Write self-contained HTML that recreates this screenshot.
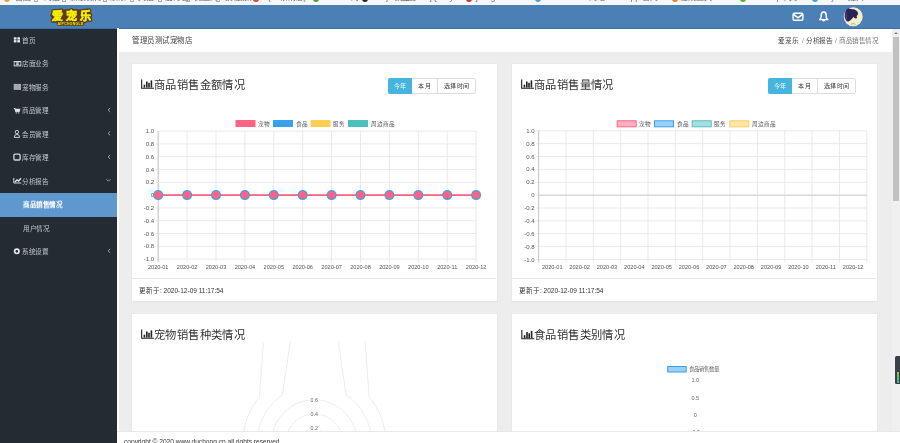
<!DOCTYPE html>
<html lang="zh-CN"><head><meta charset="utf-8">
<style>
*{margin:0;padding:0;box-sizing:border-box}
html,body{width:900px;height:443px;overflow:hidden;background:#ededed;font-family:"Liberation Sans",sans-serif;position:relative}
.abs{position:absolute}
#bm{left:0;top:0;width:900px;height:5px;background:#f7f7f7;overflow:hidden}
#hdr{left:0;top:5px;width:900px;height:23.8px;background:#4b80b6;border-bottom:1px solid #3b70a6}
#side{left:0;top:28.8px;width:117px;height:415px;background:#242b33}
#crumb{left:117px;top:28.8px;width:776px;height:23px;background:#fff}
.card{position:absolute;background:#fff;box-shadow:0 0 0 0.5px #e6e6e6,0 1px 1.5px rgba(0,0,0,0.06)}
.menu{position:absolute;left:0;width:117px;height:23.5px;color:#c4c8cc;font-size:6.6px;letter-spacing:-0.3px;line-height:23.5px;white-space:nowrap}
.menu .tx{position:absolute;left:22px;top:0}
.menu .ch{position:absolute;left:106px;top:0;font-size:8px;color:#9aa}
.ttl{position:absolute;font-size:11.3px;letter-spacing:0.4px;color:#333;white-space:nowrap;line-height:14px}
.btns{position:absolute;height:16px;border:1px solid #ddd;border-radius:2px;font-size:6px;letter-spacing:0.6px;line-height:15px;color:#333;white-space:nowrap;display:flex;background:#fff}
.btns span{display:block;height:14px;text-align:center}
.upd{position:absolute;font-size:6.5px;color:#333;white-space:nowrap;line-height:8px;margin-top:0.3px}
svg text{font-family:"Liberation Sans",sans-serif}
.abs,.menu,.ttl,.btns,.upd{will-change:transform}
</style></head><body>
<div id="bm" class="abs"><span style="position:absolute;left:4px;top:-4px;width:6px;height:6px;border-radius:3px;background:#e0a040"></span><span style="position:absolute;left:15px;top:-7.2px;font-size:8px;line-height:10px;color:#666;white-space:nowrap">百度</span><span style="position:absolute;left:34px;top:-4px;width:4px;height:6px;border:1px solid #aaa"></span><span style="position:absolute;left:44px;top:-7.2px;font-size:8px;line-height:10px;color:#666;white-space:nowrap">淘宝</span><span style="position:absolute;left:62px;top:-4px;width:4px;height:6px;border:1px solid #aaa"></span><span style="position:absolute;left:70px;top:-7.2px;font-size:8px;line-height:10px;color:#666;white-space:nowrap">新浪微博</span><span style="position:absolute;left:103px;top:-4px;width:4px;height:6px;border:1px solid #aaa"></span><span style="position:absolute;left:110px;top:-7.2px;font-size:8px;line-height:10px;color:#666;white-space:nowrap">京东</span><span style="position:absolute;left:130px;top:-4px;width:4px;height:6px;border:1px solid #aaa"></span><span style="position:absolute;left:138px;top:-7.2px;font-size:8px;line-height:10px;color:#666;white-space:nowrap">天猫</span><span style="position:absolute;left:158px;top:-4px;width:4px;height:6px;border:1px solid #aaa"></span><span style="position:absolute;left:165px;top:-7.2px;font-size:8px;line-height:10px;color:#666;white-space:nowrap">爱奇艺</span><span style="position:absolute;left:186px;top:-4px;width:4px;height:6px;border:1px solid #aaa"></span><span style="position:absolute;left:194px;top:-7.2px;font-size:8px;line-height:10px;color:#666;white-space:nowrap">优酷网</span><span style="position:absolute;left:216px;top:-4px;width:4px;height:6px;border:1px solid #aaa"></span><span style="position:absolute;left:225px;top:-7.2px;font-size:8px;line-height:10px;color:#666;white-space:nowrap">携程旅行</span><span style="position:absolute;left:253px;top:-4px;width:6px;height:6px;border-radius:3px;background:#e04030"></span><span style="position:absolute;left:268px;top:-7.2px;font-size:8px;line-height:10px;color:#666;white-space:nowrap">(85条消息)</span><span style="position:absolute;left:313px;top:-4px;width:6px;height:6px;border-radius:3px;background:#50a030"></span><span style="position:absolute;left:320px;top:-7.2px;font-size:8px;line-height:10px;color:#666;white-space:nowrap">iconfont-阿</span><span style="position:absolute;left:362px;top:-4px;width:6px;height:6px;border-radius:3px;background:#222"></span><span style="position:absolute;left:370px;top:-7.2px;font-size:8px;line-height:10px;color:#666;white-space:nowrap">Vue.js 教程</span><span style="position:absolute;left:400px;top:-7.2px;font-size:8px;line-height:10px;color:#666;white-space:nowrap">百度</span><span style="position:absolute;left:430px;top:-7.2px;font-size:8px;line-height:10px;color:#666;white-space:nowrap">jQuery API</span><span style="position:absolute;left:466px;top:-4px;width:6px;height:6px;border-radius:3px;background:#d03030"></span><span style="position:absolute;left:476px;top:-7.2px;font-size:8px;line-height:10px;color:#666;white-space:nowrap">jsongenerator.</span><span style="position:absolute;left:535px;top:-4px;width:6px;height:6px;border-radius:3px;background:#40a0e0"></span><span style="position:absolute;left:553px;top:-7.2px;font-size:8px;line-height:10px;color:#666;white-space:nowrap">Element - 网站</span><span style="position:absolute;left:613px;top:-7.2px;font-size:8px;line-height:10px;color:#666;white-space:nowrap">uni-app 官网</span><span style="position:absolute;left:672px;top:-4px;width:6px;height:6px;border-radius:3px;background:#f08020"></span><span style="position:absolute;left:680px;top:-7.2px;font-size:8px;line-height:10px;color:#666;white-space:nowrap">在线工具 - </span><span style="position:absolute;left:740px;top:-4px;width:6px;height:6px;border-radius:3px;background:#50b030"></span><span style="position:absolute;left:747px;top:-7.2px;font-size:8px;line-height:10px;color:#666;white-space:nowrap">Bootstrap中文</span><span style="position:absolute;left:812px;top:-4px;width:6px;height:6px;border-radius:3px;background:#40a0e0"></span><span style="position:absolute;left:822px;top:-7.2px;font-size:8px;line-height:10px;color:#666;white-space:nowrap">Layui - 经典</span></div>
<div id="hdr" class="abs"></div>
<div id="side" class="abs"></div>
<div id="crumb" class="abs"></div>
<div class="abs" style="left:117px;top:28px;width:2px;height:415px;background:#fff"></div>
<div class="abs" style="left:132px;top:36px;font-size:7.5px;letter-spacing:0.5px;color:#444;line-height:10px;white-space:nowrap">管理员测试宠物店</div>
<div class="abs" style="left:777.5px;top:36px;font-size:6.6px;letter-spacing:-0.2px;color:#444;line-height:9px;white-space:nowrap">爱宠乐</div>
<div class="abs" style="left:802px;top:36px;font-size:6.6px;color:#888;line-height:9px;white-space:nowrap">/</div>
<div class="abs" style="left:805.5px;top:36px;font-size:6.6px;letter-spacing:-0.4px;color:#444;line-height:9px;white-space:nowrap">分析报告</div>
<div class="abs" style="left:834.5px;top:36px;font-size:6.6px;color:#888;line-height:9px;white-space:nowrap">/</div>
<div class="abs" style="left:838.5px;top:36px;font-size:6.6px;letter-spacing:-0.4px;color:#777;line-height:9px;white-space:nowrap">商品销售情况</div>

<div class="menu" style="top:28.5px"><span class="tx">首页</span></div>
<div class="menu" style="top:52px"><span class="tx">店面业务</span></div>
<div class="menu" style="top:75.5px"><span class="tx">宠物服务</span></div>
<div class="menu" style="top:99px"><span class="tx">商品管理</span></div>
<div class="menu" style="top:122.5px"><span class="tx">会员管理</span></div>
<div class="menu" style="top:146px"><span class="tx">库存管理</span></div>
<div class="menu" style="top:169.5px"><span class="tx">分析报告</span></div>
<div class="menu" style="top:192.5px;background:#5f98cf;color:#fff;height:23.5px;line-height:23.5px"><span class="tx" style="left:23px;font-weight:bold;letter-spacing:-0.4px">商品销售情况</span></div>
<div class="menu" style="top:216.5px"><span class="tx" style="left:23px">用户情况</span></div>
<div class="menu" style="top:240px"><span class="tx">系统设置</span></div>

<div class="card" style="left:131.5px;top:63.5px;width:365.6px;height:237.8px"></div>
<div class="card" style="left:511.8px;top:63.5px;width:365.5px;height:237.8px"></div>
<div class="card" style="left:131.5px;top:313.5px;width:365.6px;height:140px"></div>
<div class="card" style="left:511.8px;top:313.5px;width:365.5px;height:140px"></div>

<div class="ttl" style="left:154px;top:77.5px">商品销售金额情况</div>
<div class="ttl" style="left:534px;top:77.5px">商品销售量情况</div>
<div class="ttl" style="left:154px;top:327.5px">宠物销售种类情况</div>
<div class="ttl" style="left:534px;top:328px">食品销售类别情况</div>

<div class="btns" style="left:388px;top:78px"><span style="width:24px;background:#45b4de;color:#fff;margin:-1px 0 -1px -1px;height:16px;line-height:16.5px;padding-left:0.6px;border-radius:2px 0 0 2px">今年</span><span style="width:26px;border-right:1px solid #ddd;padding-left:0.6px">本月</span><span style="width:37px;padding-left:0.6px">选择时间</span></div>
<div class="btns" style="left:768px;top:78px"><span style="width:24px;background:#45b4de;color:#fff;margin:-1px 0 -1px -1px;height:16px;line-height:16.5px;padding-left:0.6px;border-radius:2px 0 0 2px">今年</span><span style="width:26px;border-right:1px solid #ddd;padding-left:0.6px">本月</span><span style="width:37px;padding-left:0.6px">选择时间</span></div>

<div class="abs" style="left:132px;top:278px;width:364px;height:1px;background:#e8e8e8"></div>
<div class="abs" style="left:512px;top:278px;width:364px;height:1px;background:#e8e8e8"></div>
<div class="upd" style="left:139px;top:287px">更新于: 2020-12-09 11:17:54</div>
<div class="upd" style="left:519px;top:287px">更新于: 2020-12-09 11:17:54</div>

<svg class="abs" style="left:0;top:0" width="900" height="443" viewBox="0 0 900 443">
<line x1="155.7" y1="131.1" x2="476.1" y2="131.1" stroke="#e9e9e9" stroke-width="1"/>
<line x1="155.7" y1="143.9" x2="476.1" y2="143.9" stroke="#e9e9e9" stroke-width="1"/>
<line x1="155.7" y1="156.7" x2="476.1" y2="156.7" stroke="#e9e9e9" stroke-width="1"/>
<line x1="155.7" y1="169.5" x2="476.1" y2="169.5" stroke="#e9e9e9" stroke-width="1"/>
<line x1="155.7" y1="182.3" x2="476.1" y2="182.3" stroke="#e9e9e9" stroke-width="1"/>
<line x1="155.7" y1="195.1" x2="476.1" y2="195.1" stroke="#e9e9e9" stroke-width="1"/>
<line x1="155.7" y1="207.9" x2="476.1" y2="207.9" stroke="#e9e9e9" stroke-width="1"/>
<line x1="155.7" y1="220.7" x2="476.1" y2="220.7" stroke="#e9e9e9" stroke-width="1"/>
<line x1="155.7" y1="233.5" x2="476.1" y2="233.5" stroke="#e9e9e9" stroke-width="1"/>
<line x1="155.7" y1="246.3" x2="476.1" y2="246.3" stroke="#e9e9e9" stroke-width="1"/>
<line x1="155.7" y1="259.1" x2="476.1" y2="259.1" stroke="#e9e9e9" stroke-width="1"/>
<line x1="158.2" y1="131.1" x2="158.2" y2="262.1" stroke="#e9e9e9" stroke-width="1"/>
<line x1="187.1" y1="131.1" x2="187.1" y2="262.1" stroke="#e9e9e9" stroke-width="1"/>
<line x1="216" y1="131.1" x2="216" y2="262.1" stroke="#e9e9e9" stroke-width="1"/>
<line x1="244.9" y1="131.1" x2="244.9" y2="262.1" stroke="#e9e9e9" stroke-width="1"/>
<line x1="273.8" y1="131.1" x2="273.8" y2="262.1" stroke="#e9e9e9" stroke-width="1"/>
<line x1="302.7" y1="131.1" x2="302.7" y2="262.1" stroke="#e9e9e9" stroke-width="1"/>
<line x1="331.6" y1="131.1" x2="331.6" y2="262.1" stroke="#e9e9e9" stroke-width="1"/>
<line x1="360.5" y1="131.1" x2="360.5" y2="262.1" stroke="#e9e9e9" stroke-width="1"/>
<line x1="389.4" y1="131.1" x2="389.4" y2="262.1" stroke="#e9e9e9" stroke-width="1"/>
<line x1="418.3" y1="131.1" x2="418.3" y2="262.1" stroke="#e9e9e9" stroke-width="1"/>
<line x1="447.2" y1="131.1" x2="447.2" y2="262.1" stroke="#e9e9e9" stroke-width="1"/>
<line x1="476.1" y1="131.1" x2="476.1" y2="262.1" stroke="#e9e9e9" stroke-width="1"/>
<line x1="158.2" y1="131.1" x2="158.2" y2="262.1" stroke="#c9c9c9" stroke-width="1"/>
<line x1="158.2" y1="195.1" x2="476.1" y2="195.1" stroke="#cfcfcf" stroke-width="1"/>
<text x="154.2" y="133.1" text-anchor="end" font-size="6" fill="#555">1.0</text>
<text x="154.2" y="145.9" text-anchor="end" font-size="6" fill="#555">0.8</text>
<text x="154.2" y="158.7" text-anchor="end" font-size="6" fill="#555">0.6</text>
<text x="154.2" y="171.5" text-anchor="end" font-size="6" fill="#555">0.4</text>
<text x="154.2" y="184.3" text-anchor="end" font-size="6" fill="#555">0.2</text>
<text x="154.2" y="197.1" text-anchor="end" font-size="6" fill="#555">0</text>
<text x="154.2" y="209.9" text-anchor="end" font-size="6" fill="#555">-0.2</text>
<text x="154.2" y="222.7" text-anchor="end" font-size="6" fill="#555">-0.4</text>
<text x="154.2" y="235.5" text-anchor="end" font-size="6" fill="#555">-0.6</text>
<text x="154.2" y="248.3" text-anchor="end" font-size="6" fill="#555">-0.8</text>
<text x="154.2" y="261.1" text-anchor="end" font-size="6" fill="#555">-1.0</text>
<text x="158.2" y="268.9" text-anchor="middle" font-size="5.6" fill="#555">2020-01</text>
<text x="187.1" y="268.9" text-anchor="middle" font-size="5.6" fill="#555">2020-02</text>
<text x="216" y="268.9" text-anchor="middle" font-size="5.6" fill="#555">2020-03</text>
<text x="244.9" y="268.9" text-anchor="middle" font-size="5.6" fill="#555">2020-04</text>
<text x="273.8" y="268.9" text-anchor="middle" font-size="5.6" fill="#555">2020-05</text>
<text x="302.7" y="268.9" text-anchor="middle" font-size="5.6" fill="#555">2020-06</text>
<text x="331.6" y="268.9" text-anchor="middle" font-size="5.6" fill="#555">2020-07</text>
<text x="360.5" y="268.9" text-anchor="middle" font-size="5.6" fill="#555">2020-08</text>
<text x="389.4" y="268.9" text-anchor="middle" font-size="5.6" fill="#555">2020-09</text>
<text x="418.3" y="268.9" text-anchor="middle" font-size="5.6" fill="#555">2020-10</text>
<text x="447.2" y="268.9" text-anchor="middle" font-size="5.6" fill="#555">2020-11</text>
<text x="476.1" y="268.9" text-anchor="middle" font-size="5.6" fill="#555">2020-12</text>
<line x1="158.2" y1="195.1" x2="476.1" y2="195.1" stroke="#ff6384" stroke-width="1.6"/>
<circle cx="158.2" cy="195.1" r="5" fill="#36a2eb"/>
<circle cx="158.2" cy="195.1" r="3.8" fill="#ff6384"/>
<circle cx="187.1" cy="195.1" r="5" fill="#36a2eb"/>
<circle cx="187.1" cy="195.1" r="3.8" fill="#ff6384"/>
<circle cx="216" cy="195.1" r="5" fill="#36a2eb"/>
<circle cx="216" cy="195.1" r="3.8" fill="#ff6384"/>
<circle cx="244.9" cy="195.1" r="5" fill="#36a2eb"/>
<circle cx="244.9" cy="195.1" r="3.8" fill="#ff6384"/>
<circle cx="273.8" cy="195.1" r="5" fill="#36a2eb"/>
<circle cx="273.8" cy="195.1" r="3.8" fill="#ff6384"/>
<circle cx="302.7" cy="195.1" r="5" fill="#36a2eb"/>
<circle cx="302.7" cy="195.1" r="3.8" fill="#ff6384"/>
<circle cx="331.6" cy="195.1" r="5" fill="#36a2eb"/>
<circle cx="331.6" cy="195.1" r="3.8" fill="#ff6384"/>
<circle cx="360.5" cy="195.1" r="5" fill="#36a2eb"/>
<circle cx="360.5" cy="195.1" r="3.8" fill="#ff6384"/>
<circle cx="389.4" cy="195.1" r="5" fill="#36a2eb"/>
<circle cx="389.4" cy="195.1" r="3.8" fill="#ff6384"/>
<circle cx="418.3" cy="195.1" r="5" fill="#36a2eb"/>
<circle cx="418.3" cy="195.1" r="3.8" fill="#ff6384"/>
<circle cx="447.2" cy="195.1" r="5" fill="#36a2eb"/>
<circle cx="447.2" cy="195.1" r="3.8" fill="#ff6384"/>
<circle cx="476.1" cy="195.1" r="5" fill="#36a2eb"/>
<circle cx="476.1" cy="195.1" r="3.8" fill="#ff6384"/>
<line x1="536.1" y1="130.8" x2="866.8" y2="130.8" stroke="#e9e9e9" stroke-width="1"/>
<line x1="536.1" y1="143.67" x2="866.8" y2="143.67" stroke="#e9e9e9" stroke-width="1"/>
<line x1="536.1" y1="156.54" x2="866.8" y2="156.54" stroke="#e9e9e9" stroke-width="1"/>
<line x1="536.1" y1="169.41" x2="866.8" y2="169.41" stroke="#e9e9e9" stroke-width="1"/>
<line x1="536.1" y1="182.28" x2="866.8" y2="182.28" stroke="#e9e9e9" stroke-width="1"/>
<line x1="536.1" y1="195.15" x2="866.8" y2="195.15" stroke="#e9e9e9" stroke-width="1"/>
<line x1="536.1" y1="208.02" x2="866.8" y2="208.02" stroke="#e9e9e9" stroke-width="1"/>
<line x1="536.1" y1="220.89" x2="866.8" y2="220.89" stroke="#e9e9e9" stroke-width="1"/>
<line x1="536.1" y1="233.76" x2="866.8" y2="233.76" stroke="#e9e9e9" stroke-width="1"/>
<line x1="536.1" y1="246.63" x2="866.8" y2="246.63" stroke="#e9e9e9" stroke-width="1"/>
<line x1="536.1" y1="259.5" x2="866.8" y2="259.5" stroke="#e9e9e9" stroke-width="1"/>
<line x1="538.6" y1="130.8" x2="538.6" y2="262.5" stroke="#e9e9e9" stroke-width="1"/>
<line x1="565.95" y1="130.8" x2="565.95" y2="262.5" stroke="#e9e9e9" stroke-width="1"/>
<line x1="593.3" y1="130.8" x2="593.3" y2="262.5" stroke="#e9e9e9" stroke-width="1"/>
<line x1="620.65" y1="130.8" x2="620.65" y2="262.5" stroke="#e9e9e9" stroke-width="1"/>
<line x1="648" y1="130.8" x2="648" y2="262.5" stroke="#e9e9e9" stroke-width="1"/>
<line x1="675.35" y1="130.8" x2="675.35" y2="262.5" stroke="#e9e9e9" stroke-width="1"/>
<line x1="702.7" y1="130.8" x2="702.7" y2="262.5" stroke="#e9e9e9" stroke-width="1"/>
<line x1="730.05" y1="130.8" x2="730.05" y2="262.5" stroke="#e9e9e9" stroke-width="1"/>
<line x1="757.4" y1="130.8" x2="757.4" y2="262.5" stroke="#e9e9e9" stroke-width="1"/>
<line x1="784.75" y1="130.8" x2="784.75" y2="262.5" stroke="#e9e9e9" stroke-width="1"/>
<line x1="812.1" y1="130.8" x2="812.1" y2="262.5" stroke="#e9e9e9" stroke-width="1"/>
<line x1="839.45" y1="130.8" x2="839.45" y2="262.5" stroke="#e9e9e9" stroke-width="1"/>
<line x1="866.8" y1="130.8" x2="866.8" y2="262.5" stroke="#e9e9e9" stroke-width="1"/>
<line x1="538.6" y1="130.8" x2="538.6" y2="262.5" stroke="#c9c9c9" stroke-width="1"/>
<line x1="538.6" y1="195.15" x2="866.8" y2="195.15" stroke="#cfcfcf" stroke-width="1"/>
<text x="534.6" y="132.8" text-anchor="end" font-size="6" fill="#555">1.0</text>
<text x="534.6" y="145.67" text-anchor="end" font-size="6" fill="#555">0.8</text>
<text x="534.6" y="158.54" text-anchor="end" font-size="6" fill="#555">0.6</text>
<text x="534.6" y="171.41" text-anchor="end" font-size="6" fill="#555">0.4</text>
<text x="534.6" y="184.28" text-anchor="end" font-size="6" fill="#555">0.2</text>
<text x="534.6" y="197.15" text-anchor="end" font-size="6" fill="#555">0</text>
<text x="534.6" y="210.02" text-anchor="end" font-size="6" fill="#555">-0.2</text>
<text x="534.6" y="222.89" text-anchor="end" font-size="6" fill="#555">-0.4</text>
<text x="534.6" y="235.76" text-anchor="end" font-size="6" fill="#555">-0.6</text>
<text x="534.6" y="248.63" text-anchor="end" font-size="6" fill="#555">-0.8</text>
<text x="534.6" y="261.5" text-anchor="end" font-size="6" fill="#555">-1.0</text>
<text x="552.27" y="269.3" text-anchor="middle" font-size="5.6" fill="#555">2020-01</text>
<text x="579.62" y="269.3" text-anchor="middle" font-size="5.6" fill="#555">2020-02</text>
<text x="606.98" y="269.3" text-anchor="middle" font-size="5.6" fill="#555">2020-03</text>
<text x="634.33" y="269.3" text-anchor="middle" font-size="5.6" fill="#555">2020-04</text>
<text x="661.67" y="269.3" text-anchor="middle" font-size="5.6" fill="#555">2020-05</text>
<text x="689.02" y="269.3" text-anchor="middle" font-size="5.6" fill="#555">2020-06</text>
<text x="716.38" y="269.3" text-anchor="middle" font-size="5.6" fill="#555">2020-07</text>
<text x="743.73" y="269.3" text-anchor="middle" font-size="5.6" fill="#555">2020-08</text>
<text x="771.08" y="269.3" text-anchor="middle" font-size="5.6" fill="#555">2020-09</text>
<text x="798.42" y="269.3" text-anchor="middle" font-size="5.6" fill="#555">2020-10</text>
<text x="825.77" y="269.3" text-anchor="middle" font-size="5.6" fill="#555">2020-11</text>
<text x="853.12" y="269.3" text-anchor="middle" font-size="5.6" fill="#555">2020-12</text>
<rect x="235.5" y="120" width="20" height="7" fill="#ff6384"/>
<text x="258" y="125.7" font-size="5.6" fill="#555">宠物</text>
<rect x="273" y="120" width="20" height="7" fill="#36a2eb"/>
<text x="295.5" y="125.7" font-size="5.6" fill="#555">食品</text>
<rect x="310.6" y="120" width="20" height="7" fill="#ffce56"/>
<text x="333.1" y="125.7" font-size="5.6" fill="#555">服务</text>
<rect x="348" y="120" width="20" height="7" fill="#4bc0c0"/>
<text x="370.5" y="125.7" font-size="5.6" fill="#555">周边商品</text>
<rect x="617.2" y="120.8" width="19" height="6" fill="#ffb1c1" stroke="#ff6384" stroke-width="1"/>
<text x="639.2" y="126" font-size="5.6" fill="#555">宠物</text>
<rect x="654.5" y="120.8" width="19" height="6" fill="#9ad0f5" stroke="#36a2eb" stroke-width="1"/>
<text x="676.5" y="126" font-size="5.6" fill="#555">食品</text>
<rect x="692.2" y="120.8" width="19" height="6" fill="#a5dfdf" stroke="#4bc0c0" stroke-width="1"/>
<text x="714.2" y="126" font-size="5.6" fill="#555">服务</text>
<rect x="729.8" y="120.8" width="19" height="6" fill="#ffe6aa" stroke="#ffce56" stroke-width="1"/>
<text x="751.8" y="126" font-size="5.6" fill="#555">周边商品</text>
<circle cx="314.3" cy="442.6" r="14.3" fill="none" stroke="#ececec" stroke-width="1"/>
<circle cx="314.3" cy="442.6" r="28.6" fill="none" stroke="#ececec" stroke-width="1"/>
<circle cx="314.3" cy="442.6" r="42.9" fill="none" stroke="#ececec" stroke-width="1"/>
<path d="M290.2 342 L282.5 395.05 A57.2 57.2 0 0 0 257.1 442.6 M338.4 342 L346.1 395.05 A57.2 57.2 0 0 1 371.5 442.6" fill="none" stroke="#ececec" stroke-width="1"/>
<path d="M263.4 342 L259.5 396.67 A71.5 71.5 0 0 0 242.8 442.6 M365.2 342 L369.1 396.67 A71.5 71.5 0 0 1 385.8 442.6" fill="none" stroke="#ececec" stroke-width="1"/>
<rect x="308.3" y="396.2" width="12" height="7" fill="#fff"/>
<text x="314.3" y="401.7" text-anchor="middle" font-size="5.3" fill="#666">0.6</text>
<rect x="308.3" y="410.5" width="12" height="7" fill="#fff"/>
<text x="314.3" y="416" text-anchor="middle" font-size="5.3" fill="#666">0.4</text>
<rect x="308.3" y="424.8" width="12" height="7" fill="#fff"/>
<text x="314.3" y="430.3" text-anchor="middle" font-size="5.3" fill="#666">0.2</text>
<rect x="667.7" y="366.5" width="18.5" height="5.5" fill="#9ad0f5" stroke="#36a2eb" stroke-width="1"/>
<text x="689.3" y="371" font-size="5.4" fill="#666">食品销售数量</text>
<text x="695.3" y="382.4" text-anchor="middle" font-size="5.5" fill="#666">1.0</text>
<text x="695.3" y="399.7" text-anchor="middle" font-size="5.5" fill="#666">0.5</text>
<text x="695.3" y="416.6" text-anchor="middle" font-size="5.5" fill="#666">0</text>
<text x="695.3" y="433.5" text-anchor="middle" font-size="5.5" fill="#666">-0.5</text>
</svg>

<svg class="abs" style="left:0;top:0" width="900" height="443" viewBox="0 0 900 443">
<path d="M141.65 79.6 V88.25 H154" fill="none" stroke="#222" stroke-width="1.1"/>
<rect x="143.6" y="84.7" width="1.6" height="2.9" fill="#222"/>
<rect x="146" y="81.5" width="1.6" height="6.1" fill="#222"/>
<rect x="148.2" y="82.8" width="1.6" height="4.8" fill="#222"/>
<rect x="150.6" y="80.4" width="1.6" height="7.2" fill="#222"/>
<path d="M521.65 79.6 V88.25 H534" fill="none" stroke="#222" stroke-width="1.1"/>
<rect x="523.6" y="84.7" width="1.6" height="2.9" fill="#222"/>
<rect x="526" y="81.5" width="1.6" height="6.1" fill="#222"/>
<rect x="528.2" y="82.8" width="1.6" height="4.8" fill="#222"/>
<rect x="530.6" y="80.4" width="1.6" height="7.2" fill="#222"/>
<path d="M141.65 329.6 V338.25 H154" fill="none" stroke="#222" stroke-width="1.1"/>
<rect x="143.6" y="334.7" width="1.6" height="2.9" fill="#222"/>
<rect x="146" y="331.5" width="1.6" height="6.1" fill="#222"/>
<rect x="148.2" y="332.8" width="1.6" height="4.8" fill="#222"/>
<rect x="150.6" y="330.4" width="1.6" height="7.2" fill="#222"/>
<path d="M521.85 330.1 V338.75 H534.2" fill="none" stroke="#222" stroke-width="1.1"/>
<rect x="523.8" y="335.2" width="1.6" height="2.9" fill="#222"/>
<rect x="526.2" y="332" width="1.6" height="6.1" fill="#222"/>
<rect x="528.4" y="333.3" width="1.6" height="4.8" fill="#222"/>
<rect x="530.8" y="330.9" width="1.6" height="7.2" fill="#222"/>
<rect x="13.8" y="37.3" width="2.7" height="2.3" fill="#e8eaec"/>
<rect x="17.3" y="37.3" width="2.7" height="2.3" fill="#e8eaec"/>
<rect x="13.8" y="40.1" width="2.7" height="2.3" fill="#e8eaec"/>
<rect x="17.3" y="40.1" width="2.7" height="2.3" fill="#e8eaec"/>
<rect x="14.2" y="61.5" width="6.6" height="4.4" fill="none" stroke="#d4d7da" stroke-width="1"/><rect x="15" y="62.2" width="5" height="3" fill="#c8ccd0"/>
<ellipse cx="15.5" cy="63.6" rx="0.9" ry="1.3" fill="#242b33"/><ellipse cx="19.4" cy="63.6" rx="0.9" ry="1.3" fill="#242b33"/>
<rect x="13.7" y="83.9" width="7.3" height="6" fill="#a9adb2"/><rect x="17.1" y="83.9" width="0.5" height="6" fill="#8a8f95"/>
<path d="M13.8 108.5 H14.9 L15.9 111.8 H19.1 L19.7 109.4 H15.2" fill="none" stroke="#dfe1e4" stroke-width="1.1"/><rect x="15.4" y="109.4" width="3.9" height="2.2" fill="#dfe1e4"/><circle cx="16.3" cy="113" r="0.6" fill="#dfe1e4"/><circle cx="18.7" cy="113" r="0.6" fill="#dfe1e4"/>
<circle cx="16.9" cy="132" r="1.7" fill="none" stroke="#c9ccd0" stroke-width="1"/><path d="M14.2 137.4 Q14.2 134.4 16.9 134.4 Q19.6 134.4 19.6 137.4 Z" fill="none" stroke="#c9ccd0" stroke-width="1"/>
<rect x="13.9" y="154.2" width="6.2" height="5.8" rx="1" fill="none" stroke="#d4d7da" stroke-width="1.3"/>
<path d="M13.8 177.8 V183 H21.3" fill="none" stroke="#d8dadd" stroke-width="1"/><path d="M15 182 L17 179.8 L18.5 181 L21 178.2" fill="none" stroke="#e8eaec" stroke-width="1.3"/>
<circle cx="16.8" cy="251.3" r="2.2" fill="none" stroke="#e8eaec" stroke-width="1.7"/>
<path d="M110.2 107.9 L108.1 109.9 L110.2 111.9" fill="none" stroke="#aeb2b7" stroke-width="0.9"/>
<path d="M110.2 131.4 L108.1 133.4 L110.2 135.4" fill="none" stroke="#aeb2b7" stroke-width="0.9"/>
<path d="M110.2 154.9 L108.1 156.9 L110.2 158.9" fill="none" stroke="#aeb2b7" stroke-width="0.9"/>
<path d="M110.2 248.9 L108.1 250.9 L110.2 252.9" fill="none" stroke="#aeb2b7" stroke-width="0.9"/>
<path d="M106.4 179.2 L108.4 181.2 L110.4 179.2" fill="none" stroke="#aeb2b7" stroke-width="0.9"/>
<rect x="793.1" y="13.3" width="9.8" height="7" rx="1.3" fill="none" stroke="#fff" stroke-width="1.4"/><path d="M793.8 14.6 L798 17.9 L802.2 14.6" fill="none" stroke="#fff" stroke-width="1.5"/>
<path d="M819.6 19.6 Q821.2 18.4 821.2 16.2 V15.2 Q821.2 12 823.7 12 Q826.2 12 826.2 15.2 V16.2 Q826.2 18.4 827.8 19.6 Z" fill="none" stroke="#fff" stroke-width="1.4" stroke-linejoin="round"/><path d="M822.4 20.3 Q823.7 22 825 20.3 Z" fill="#fff" stroke="#fff" stroke-width="0.8"/>
<circle cx="853.2" cy="16.8" r="9.5" fill="#f4eec6"/>
<path d="M848.2 8.3 L851 9.1 L854.8 9.4 L857.4 11.4 L858.2 13.9 L856.6 16.2 L857.2 18 L855.2 18.4 L853.4 17 L852 18.8 L850.2 20.6 L848 21.8 L846 20.6 L844.6 17 L845 12.6 L846.4 9.8 Z" fill="#2b2258"/><path d="M846 12 L846.6 19.6" stroke="#6a5a9a" stroke-width="0.7"/>
<path d="M851 24.2 L853.5 23.6 L855.5 24.4" fill="none" stroke="#7fb5d0" stroke-width="1"/>
<ellipse cx="71.3" cy="15.3" rx="21" ry="6.2" fill="#5e3b1e"/>
<text x="72.8" y="19.9" text-anchor="middle" font-size="11" font-weight="bold" fill="#5e3b1e" stroke="#5e3b1e" stroke-width="3.4" stroke-linejoin="round" letter-spacing="2.6" style="font-family:&quot;Liberation Sans&quot;,sans-serif">爱宠乐</text>
<text x="72.8" y="19.9" text-anchor="middle" font-size="11" font-weight="bold" fill="#f7ef00" stroke="#f7ef00" stroke-width="0.5" letter-spacing="2.6" style="font-family:&quot;Liberation Sans&quot;,sans-serif">爱宠乐</text>
<rect x="56.5" y="21.5" width="28" height="4.2" rx="2" fill="#5e3b1e"/>
<text x="70.6" y="24.9" text-anchor="middle" font-size="3.4" font-weight="bold" fill="#f7ef00" letter-spacing="0.35">AIPCHONGLE</text>
</svg>
<div class="abs" style="left:117px;top:430.5px;width:783px;height:13px;background:#fff;border-top:1px solid #e8e8e8"></div>
<div class="abs" style="left:124px;top:437.5px;font-size:6.6px;color:#333;line-height:8px;white-space:nowrap">copyright © 2020 www.duchong.cn all rights reserved</div>

<div class="abs" style="left:892px;top:29.5px;width:8px;height:401px;background:#f0f0f0"></div>
<div class="abs" style="left:893px;top:37px;width:6px;height:164px;background:#c1c1c1"></div>
<svg class="abs" style="left:892px;top:29px" width="8" height="8"><path d="M2.2 5 L4 3 L5.8 5 Z" fill="#7a7a7a"/></svg>
<div class="abs" style="left:895.2px;top:355.7px;width:4.8px;height:27.7px;background:#3b4049;border-radius:1.5px 0 0 1.5px"></div>
<div class="abs" style="left:896.8px;top:371.5px;width:1.8px;height:10.5px;background:linear-gradient(#8fc34a,#3fb09a)"></div>
</body></html>
